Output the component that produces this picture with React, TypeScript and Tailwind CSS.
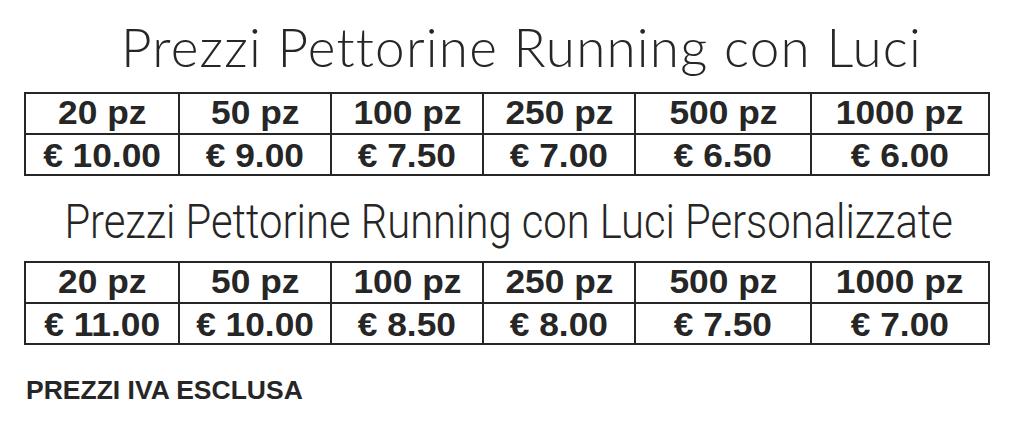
import React from 'react';

interface PriceTable {
  title: string;
  prices: string[];
}

const quantities = ['20 pz', '50 pz', '100 pz', '250 pz', '500 pz', '1000 pz'];

const tables: PriceTable[] = [
  {
    title: 'Prezzi Pettorine Running con Luci',
    prices: ['€ 10.00', '€ 9.00', '€ 7.50', '€ 7.00', '€ 6.50', '€ 6.00'],
  },
  {
    title: 'Prezzi Pettorine Running con Luci Personalizzate',
    prices: ['€ 11.00', '€ 10.00', '€ 8.50', '€ 8.00', '€ 7.50', '€ 7.00'],
  },
];

const Grid: React.FC<{ prices: string[] }> = ({ prices }) => (
  <div className="ml-[24px] grid w-[966px] grid-cols-[152px_150px_150px_150px_174px_176px] gap-[2px] bg-[#262626] p-[2px] font-['Liberation_Sans',Arial,sans-serif] font-bold text-[#262626]">
    {quantities.map((q) => (
      <div key={q} className="flex h-[39px] items-center justify-center bg-white pb-[3px] text-[33px] leading-none">
        <span className="inline-block scale-x-[1.07]">{q}</span>
      </div>
    ))}
    {prices.map((p, i) => (
      <div key={i} className="flex h-[39px] items-center justify-center bg-white pt-[2px] text-[33px] leading-none">
        <span className="inline-block scale-x-[1.07]">{p}</span>
      </div>
    ))}
  </div>
);

export default function App() {
  return (
    <div className="flex h-[436px] w-[1023px] flex-col bg-white text-[#262626]">
      <h1 className="mt-[21px] pl-[20px] text-center font-['Lato',sans-serif] text-[53px] font-light leading-[52px] tracking-[1.2px]">
        {tables[0].title}
      </h1>
      <div className="mt-[19px]">
        <Grid prices={tables[0].prices} />
      </div>
      <h2 className="mt-[22px] whitespace-nowrap text-center font-['Roboto',sans-serif] text-[48px] font-light leading-[48px]">
        <span className="inline-block -translate-x-[3px] scale-x-[0.87]">{tables[1].title}</span>
      </h2>
      <div className="mt-[15px]">
        <Grid prices={tables[1].prices} />
      </div>
      <p className="ml-[26px] mt-[32px] font-['Liberation_Sans',Arial,sans-serif] text-[26.5px] font-bold leading-[26px]">
        PREZZI IVA ESCLUSA
      </p>
    </div>
  );
}
